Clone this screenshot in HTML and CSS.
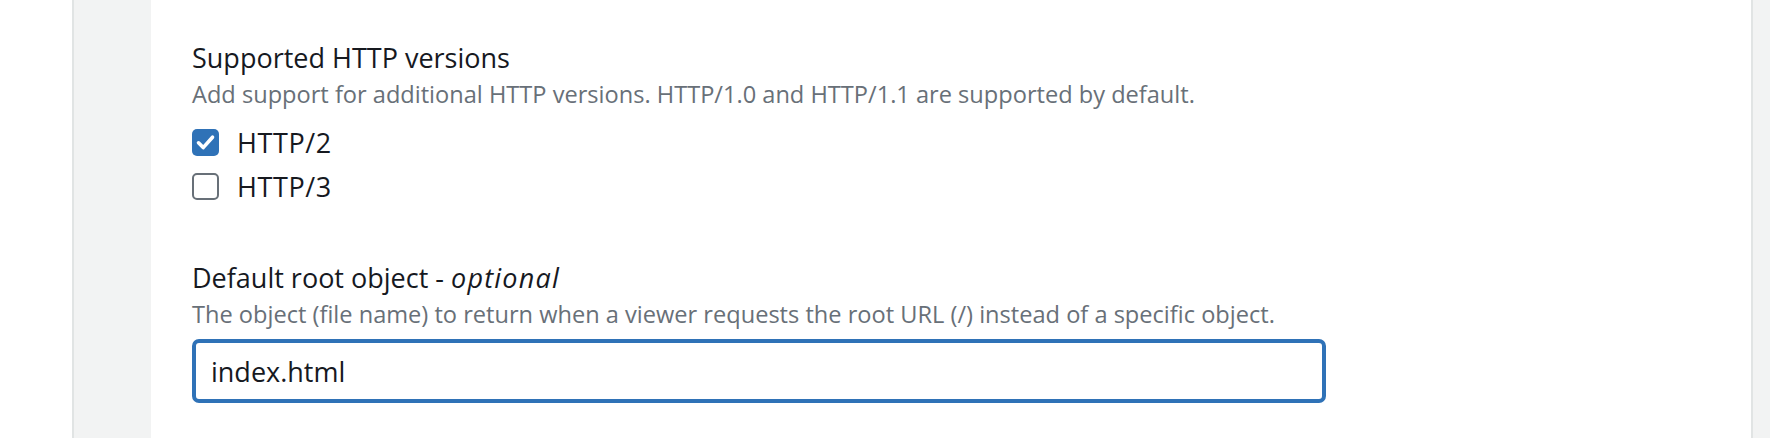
FILE: index.html
```html
<!DOCTYPE html>
<html lang="en">
<head>
<meta charset="utf-8">
<title>Distribution settings</title>
<link rel="stylesheet" href="styles.css">
</head>
<body>
<div class="page">
  <div class="gutter"></div>
  <div class="side"></div>
  <main class="panel">
    <section class="field field-first">
      <div class="label">Supported HTTP versions</div>
      <div class="desc">Add support for additional HTTP versions. HTTP/1.0 and HTTP/1.1 are supported by default.</div>
      <div class="options">
        <label class="option">
          <span class="box box-checked">
            <svg viewBox="0 0 27 27" width="27" height="27"><path d="M6.5 13.8 L11.2 18.6 L20.5 8.2" fill="none" stroke="#ffffff" stroke-width="3.6" stroke-linecap="round" stroke-linejoin="round"/></svg>
          </span>
          <span class="option-text">HTTP/2</span>
        </label>
        <label class="option">
          <span class="box"></span>
          <span class="option-text">HTTP/3</span>
        </label>
      </div>
    </section>
    <section class="field field-second">
      <div class="label">Default root object - <em>optional</em></div>
      <div class="desc">The object (file name) to return when a viewer requests the root URL (/) instead of a specific object.</div>
      <div class="input">index.html</div>
    </section>
  </main>
  <div class="edge"></div>
</div>
</body>
</html>
```
FILE: styles.css
```css
* { box-sizing: border-box; }
html, body { margin: 0; padding: 0; background: #ffffff; }
body { font-family: "Open Sans", "Noto Sans", sans-serif; color: #16191f; }

.page { display: flex; height: 438px; width: 1770px; overflow: hidden; }
.gutter { width: 72px; background: #ffffff; flex: none; }
.side { width: 79px; background: #f2f3f3; border-left: 2px solid #e1e4e4; flex: none; }
.panel { flex: 1; background: #ffffff; padding-left: 41px; }
.edge { width: 19px; background: #f2f3f3; border-left: 2px solid #e1e4e4; flex: none; }

.field { display: flex; flex-direction: column; }
.field-first { padding-top: 40px; }
.field-second { padding-top: 52px; }

.label { font-size: 27px; line-height: 36px; height: 36px; color: #16191f; margin-bottom: 2px; }
.label em { font-style: italic; letter-spacing: 1.2px; }
.desc { font-size: 23.6px; line-height: 32px; color: #687078; }

.options { display: flex; flex-direction: column; margin-top: 10px; }
.option { display: flex; align-items: center; height: 44px; gap: 18px; }
.box { width: 27px; height: 27px; border: 2.5px solid #687078; border-radius: 5px; background: #ffffff; display: flex; flex: none; }
.box-checked { border: none; background: #2f72b7; }
.box svg { display: block; }
.option-text { font-size: 27px; letter-spacing: 0.6px; color: #16191f; }

.input { margin-top: 9px; width: 1134px; height: 64px; border: 4px solid #2f72b7; border-radius: 7px; padding-left: 15px; font-size: 27px; display: flex; align-items: center; color: #16191f; }
```
